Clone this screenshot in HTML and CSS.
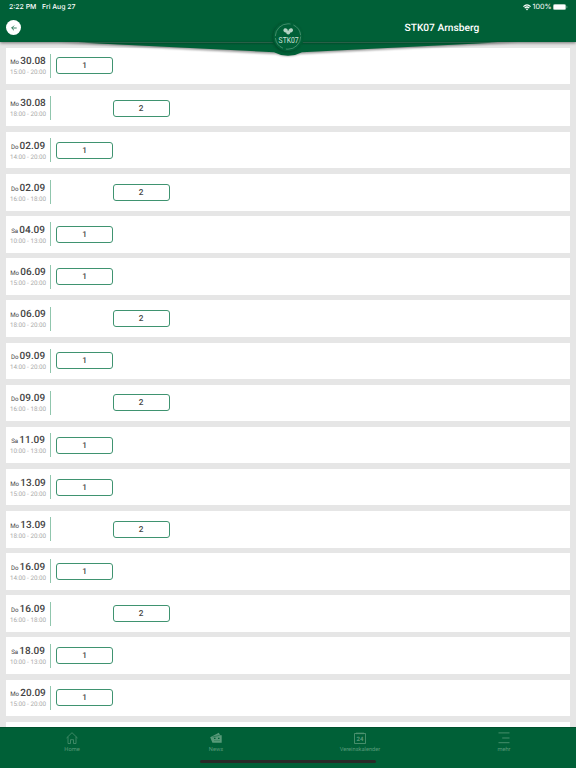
FILE: index.html
```
<!DOCTYPE html>
<html lang="de">
<head>
<meta charset="utf-8">
<title>STK07 Arnsberg</title>
<link rel="stylesheet" href="styles.css">
</head>
<body>
<div class="app">
  <header class="header">
    <div class="status">
      <span class="time">2:22 PM</span><span class="date">Fri Aug 27</span>
      <svg class="wifi" width="8" height="7" viewBox="0 0 8 7" fill="none" stroke="#fff" stroke-width="1.2"><path d="M.4 2.6Q4-.8 7.6 2.6M1.7 4.1Q4 1.9 6.3 4.1"/><path d="M2.8 5.1Q4 4.1 5.2 5.1L4 6.5Z" fill="#fff" stroke="none"/></svg>
      <span class="percent">100%</span>
      <svg class="battery" width="15" height="6" viewBox="0 0 15 6"><rect x=".25" y=".25" width="12.5" height="5.5" rx="1.5" fill="#fff" stroke="#8bb8a1" stroke-width=".5"/><path d="M13.6 2v2q.8-.2.8-1t-.8-1" fill="#8bb8a1"/></svg>
    </div>
    <div class="titlebar">
      <a class="back"><svg width="6" height="6" viewBox="0 0 6 6" fill="none" stroke="#006037" stroke-width=".8"><path d="M5.7 3H.7M3 .7.7 3 3 5.3"/></svg></a>
      <h1>STK07 Arnsberg</h1>
    </div>
  </header>
  <svg class="emblem" width="576" height="46" viewBox="0 0 576 46">
    <defs>
      <filter id="soft" x="-20%" y="-50%" width="140%" height="200%"><feGaussianBlur stdDeviation="1.3"/></filter>
      <linearGradient id="fold" x1="0" y1="0" x2="0" y2="1"><stop offset="0" stop-color="#004124"/><stop offset="1" stop-color="#004124" stop-opacity="0"/></linearGradient>
    </defs>
    <path d="M58 25.5H518L300 37Q288 41 276 37Z" fill="#000" opacity=".4" filter="url(#soft)"/>
    <path d="M78 25.5H498L302 35.2Q288 42.5 274 35.2Z" fill="#006037"/>
    <path d="M84 25.5H492L442 28H134Z" fill="url(#fold)" opacity=".7"/>
    <circle cx="288" cy="19.5" r="16" fill="#006037"/>
    <circle cx="287" cy="20.3" r="15" fill="#003e23" opacity=".6" filter="url(#soft)"/>
    <circle cx="288" cy="19.5" r="14.7" fill="#006037"/>
    <circle cx="288" cy="19.5" r="12.7" fill="none" stroke="#5c9f7e" stroke-width=".7" stroke-dasharray="22 3 13 2"/>
    <g fill="#b5d3c4"><ellipse cx="285.6" cy="13.4" rx="2.3" ry="2" transform="rotate(25 285.6 13.4)"/><ellipse cx="290.8" cy="13.4" rx="2.3" ry="2" transform="rotate(-25 290.8 13.4)"/><circle cx="288.2" cy="15.4" r="2"/></g>
    <text class="crest" x="288.6" y="26.3" text-anchor="middle" textLength="20" lengthAdjust="spacingAndGlyphs">STK07</text>
  </svg>
  <main class="list">
    <section class="row"><div class="when"><p>Mo <b>30.08</b></p><small>15:00 - 20:00</small></div><div class="slots"><span class="slot">1</span></div></section>
    <section class="row"><div class="when"><p>Mo <b>30.08</b></p><small>18:00 - 20:00</small></div><div class="slots"><span class="slot second">2</span></div></section>
    <section class="row"><div class="when"><p>Do <b>02.09</b></p><small>14:00 - 20:00</small></div><div class="slots"><span class="slot">1</span></div></section>
    <section class="row"><div class="when"><p>Do <b>02.09</b></p><small>16:00 - 18:00</small></div><div class="slots"><span class="slot second">2</span></div></section>
    <section class="row"><div class="when"><p>Sa <b>04.09</b></p><small>10:00 - 13:00</small></div><div class="slots"><span class="slot">1</span></div></section>
    <section class="row"><div class="when"><p>Mo <b>06.09</b></p><small>15:00 - 20:00</small></div><div class="slots"><span class="slot">1</span></div></section>
    <section class="row"><div class="when"><p>Mo <b>06.09</b></p><small>18:00 - 20:00</small></div><div class="slots"><span class="slot second">2</span></div></section>
    <section class="row"><div class="when"><p>Do <b>09.09</b></p><small>14:00 - 20:00</small></div><div class="slots"><span class="slot">1</span></div></section>
    <section class="row"><div class="when"><p>Do <b>09.09</b></p><small>16:00 - 18:00</small></div><div class="slots"><span class="slot second">2</span></div></section>
    <section class="row"><div class="when"><p>Sa <b>11.09</b></p><small>10:00 - 13:00</small></div><div class="slots"><span class="slot">1</span></div></section>
    <section class="row"><div class="when"><p>Mo <b>13.09</b></p><small>15:00 - 20:00</small></div><div class="slots"><span class="slot">1</span></div></section>
    <section class="row"><div class="when"><p>Mo <b>13.09</b></p><small>18:00 - 20:00</small></div><div class="slots"><span class="slot second">2</span></div></section>
    <section class="row"><div class="when"><p>Do <b>16.09</b></p><small>14:00 - 20:00</small></div><div class="slots"><span class="slot">1</span></div></section>
    <section class="row"><div class="when"><p>Do <b>16.09</b></p><small>16:00 - 18:00</small></div><div class="slots"><span class="slot second">2</span></div></section>
    <section class="row"><div class="when"><p>Sa <b>18.09</b></p><small>10:00 - 13:00</small></div><div class="slots"><span class="slot">1</span></div></section>
    <section class="row"><div class="when"><p>Mo <b>20.09</b></p><small>15:00 - 20:00</small></div><div class="slots"><span class="slot">1</span></div></section>
    <section class="row"></section>
  </main>
  <nav class="tabs">
    <a><svg width="12" height="12" viewBox="0 0 12 12" fill="none" stroke="currentColor" stroke-width=".7"><path d="M.5 6 6 .7 11.5 6M2 4.8v6.7h2.5V7.7h3v3.8H10V4.8"/></svg><span>Home</span></a>
    <a><svg width="12" height="12" viewBox="0 0 12 12" fill="currentColor"><path d="M.2 5.3 8.8.8l1.4 2.5h1.5v7.5H2.4Z"/><path d="M2.5 5 9.7 3.3" stroke="#006037" stroke-width=".5"/><path d="M4 5.8h1.5v1.3H4zM8 5.8h1.5v1.3H8zM4 8.7h6v.4H4z" fill="#006037"/></svg><span>News</span></a>
    <a><svg width="12" height="12" viewBox="0 0 12 12" fill="none" stroke="currentColor" stroke-width=".8"><path d="M.5 1.5h11v10H.5zM3 .3v2M5 .3v2M7 .3v2M9 .3v2"/><text class="day" x="6" y="8.8" text-anchor="middle">24</text></svg><span>Vereinskalender</span></a>
    <a><svg width="12" height="12" viewBox="0 0 12 12" fill="none" stroke="currentColor" stroke-width=".8"><path d="M.5.9h11M4.2 6h7.3M.5 10.7h11"/></svg><span>mehr</span></a>
    <i class="home-indicator"></i>
  </nav>
</div>
</body>
</html>
```
FILE: styles.css
```
* { box-sizing: border-box; }
body { margin: 0; font-family: Roboto, "Liberation Sans", sans-serif; text-rendering: geometricPrecision; }
.app { position: relative; display: flex; flex-direction: column; width: 576px; height: 768px; overflow: hidden; background: #e6e6e6; }
.header { position: relative; z-index: 2; flex: 0 0 42px; background: #006037; box-shadow: 0 1px 3px rgba(0,0,0,.5); color: #fff; }
.status { display: flex; align-items: center; height: 14px; padding: 0 9px; font: 500 6.9px/14px Inter, sans-serif; }
.time { width: 33px; white-space: nowrap; }
.date { flex: 1; }
.wifi { margin-right: 2px; }
.percent { width: 20.5px; font-weight: 400; font-size: 7.2px; white-space: nowrap; }
.battery { margin-right: -1px; }
.titlebar { display: flex; align-items: center; height: 27px; padding-left: 6px; }
.back { display: grid; place-items: center; width: 15px; height: 15px; border-radius: 50%; background: #fff; }
h1 { width: 100px; margin: 0 0 0 383.5px; padding-top: 2px; font-size: 10.2px; font-weight: 500; line-height: 14px; white-space: nowrap; }
.emblem { position: absolute; z-index: 3; left: 0; top: 16.5px; }
.crest { font: 8.3px Roboto, sans-serif; fill: #d0e3da; }
.list { flex: 1; min-height: 0; overflow: hidden; display: flex; flex-direction: column; gap: 5.63px; padding: 5.7px 6px 0; }
.row { display: flex; flex: 0 0 36.5px; align-items: center; background: #fff; }
.when { width: 45px; height: 24px; padding-top: 1.4px; border-right: 1px solid #90c6ad; text-align: center; white-space: nowrap; color: #444; }
.when p { margin: 0; font-size: 6.2px; line-height: 14px; }
.when b { margin-left: -.4px; font-size: 10px; font-weight: 500; }
.when small { display: block; font-size: 6.3px; line-height: 7px; color: #aaa; }
.slots { display: flex; padding-left: 5px; }
.slot { width: 57px; height: 17px; border: 1px solid #3f9370; border-radius: 3px; text-align: center; font-size: 8.2px; font-weight: 500; line-height: 17px; color: #444; }
.slot.second { margin-left: 56.5px; }
.tabs { position: relative; z-index: 2; flex: 0 0 41px; display: flex; background: #006037; border-top: 1px solid #00512e; color: #589a79; }
.tabs a { flex: 1; display: flex; flex-direction: column; align-items: center; gap: 2px; padding-top: 4px; font-size: 5.7px; line-height: 8px; }
.day { font: 700 6px Roboto, sans-serif; fill: currentColor; stroke: none; }
.home-indicator { position: absolute; left: 200px; top: 32px; width: 176px; height: 3px; border-radius: 2px; background: #292b29; }
```
